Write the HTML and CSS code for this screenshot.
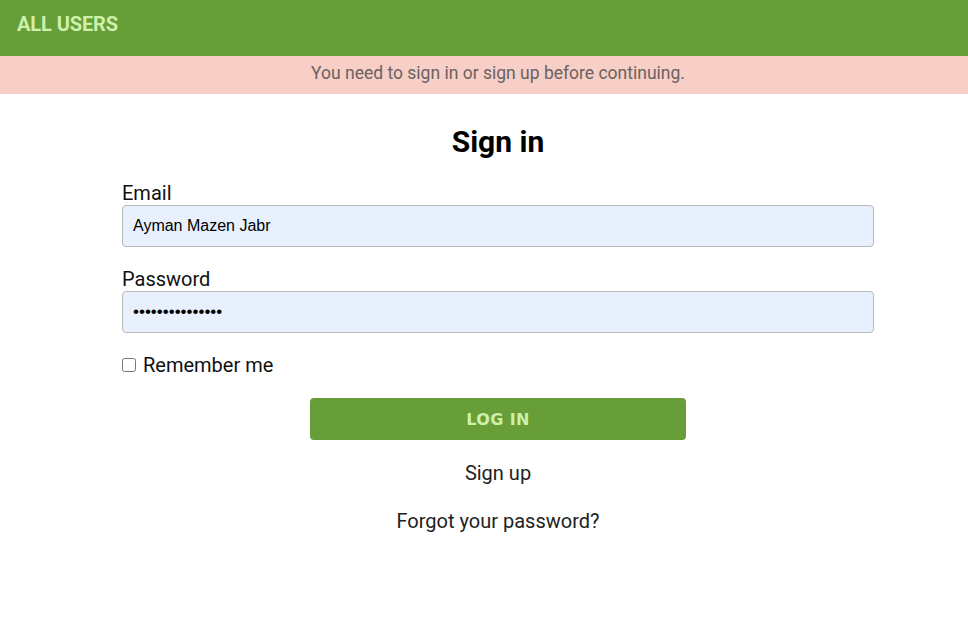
FILE: index.html
```html
<!DOCTYPE html>
<html>
<head>
<meta charset="utf-8">
<link rel="stylesheet" href="styles.css">
</head>
<body>
<header class="topbar">
  <a class="brand" href="#">ALL USERS</a>
</header>
<div class="flash">You need to sign in or sign up before continuing.</div>
<main class="auth">
  <h1 class="title">Sign in</h1>
  <form class="form">
    <div class="field">
      <label class="label" for="email">Email</label>
      <input class="input" id="email" type="text" value="Ayman Mazen Jabr">
    </div>
    <div class="field">
      <label class="label" for="pw">Password</label>
      <input class="input pw" id="pw" type="password" value="abcdefghijklmno">
    </div>
    <div class="remember">
      <input class="check" type="checkbox" id="rem">
      <label for="rem">Remember me</label>
    </div>
    <div class="actions">
      <button class="btn" type="button">LOG IN</button>
    </div>
  </form>
  <div class="links">
    <a href="#" class="link">Sign up</a>
    <a href="#" class="link">Forgot your password?</a>
  </div>
</main>
</body>
</html>
```

FILE: styles.css
```css
* { box-sizing: border-box; }
html, body { margin: 0; padding: 0; background: #fff; }
body { font-family: Roboto, "Liberation Sans", sans-serif; color: #111; }

.topbar {
  height: 56px;
  background: #679e37;
  display: flex;
  align-items: center;
  padding: 0 17px;
}
.brand {
  color: #cdf0ad;
  font-weight: 700;
  font-size: 20px;
  text-decoration: none;
  letter-spacing: -0.1px;
  margin-top: -8px;
}

.flash {
  height: 38px;
  background: #f7cfc7;
  color: #6b6260;
  font-size: 17.5px;
  display: flex;
  align-items: center;
  justify-content: center;
  padding-left: 28px;
  padding-bottom: 4px;
}

.auth {
  width: 752px;
  margin-left: 122px;
  display: flex;
  flex-direction: column;
}
.title {
  margin: 30px 0 21px;
  text-align: center;
  font-size: 30px;
  font-weight: 700;
  line-height: 36px;
  color: #000;
}
.form { display: flex; flex-direction: column; }
.field { display: flex; flex-direction: column; margin-bottom: 20px; }
.label { font-size: 20px; line-height: 24px; color: #111; }
.input {
  height: 42px;
  border: 1px solid #b9b9b9;
  border-radius: 4px;
  background: #e8f0fe;
  padding: 0 10px;
  font-family: Arial, "Liberation Sans", sans-serif;
  font-size: 16px;
  color: #000;
  outline: none;
}
.pw { font-size: 17px; }

.remember {
  display: flex;
  align-items: center;
  font-size: 20px;
  margin-top: 0;
  color: #111;
}
.check { width: 14px; height: 14px; margin: 0 7px 0 0; }

.actions { display: flex; justify-content: center; margin-top: 21px; }
.btn {
  width: 376px;
  height: 42px;
  background: #679e37;
  color: #cdf0ad;
  border: none;
  border-radius: 4px;
  font-family: "DejaVu Sans", Arial, sans-serif;
  font-weight: 900;
  font-size: 16px;
  letter-spacing: 0.4px;
}

.links {
  display: flex;
  flex-direction: column;
  align-items: center;
  gap: 24px;
  margin-top: 21px;
}
.link { color: #222; font-size: 20px; text-decoration: none; line-height: 24px; }
```
